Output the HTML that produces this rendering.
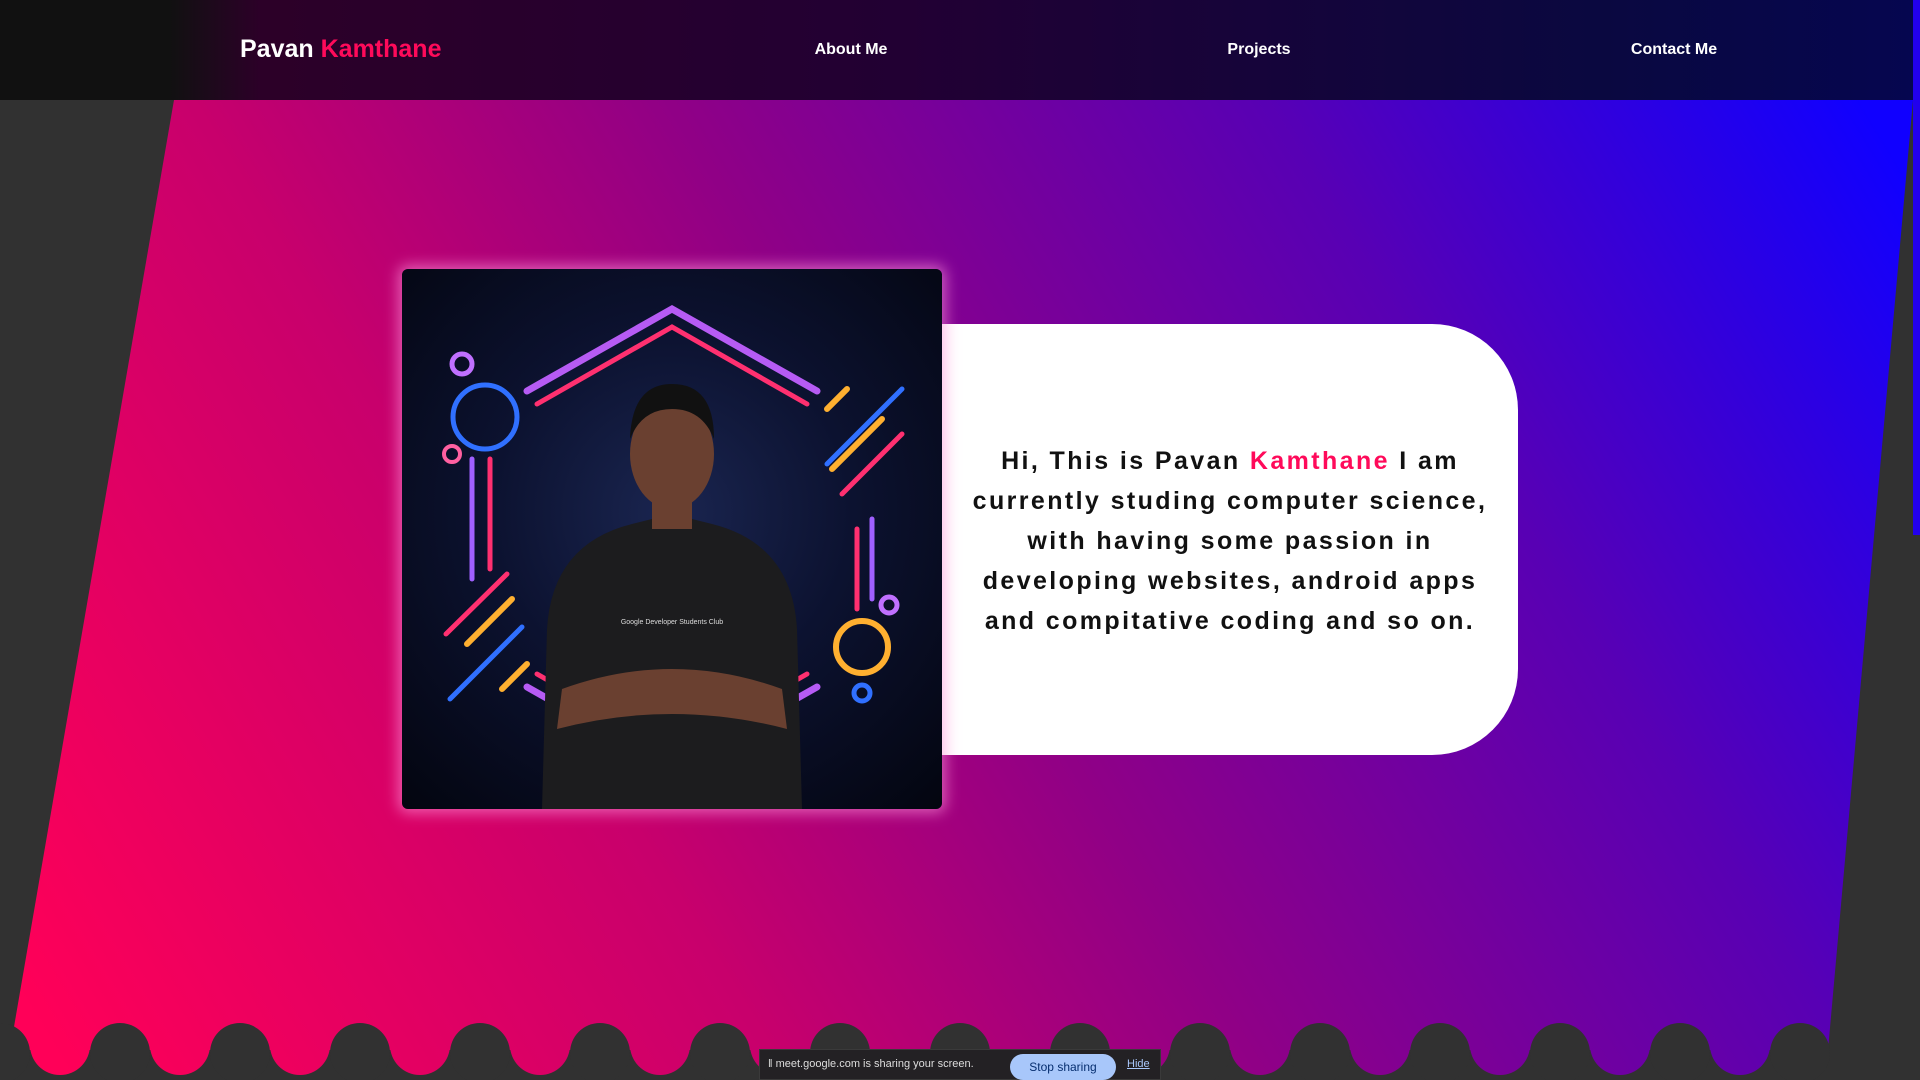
<!DOCTYPE html>
<html><head><meta charset="utf-8"><style>
*{margin:0;padding:0;box-sizing:border-box}
html,body{width:1920px;height:1080px;overflow:hidden;background:#313131;font-family:"Liberation Sans",sans-serif}
nav{position:absolute;left:0;top:0;width:1920px;height:100px;background:linear-gradient(90deg,#111 0,#111 170px,#2c0028 260px,#220033 900px,#0a0840 1600px,#050650 1920px)}
.logo{position:absolute;left:240px;top:35px;font-size:25px;font-weight:bold;color:#fff}
.logo span{color:#ff0a5a}
.nl{position:absolute;top:41px;color:#fff;font-size:16px;font-weight:bold;transform:translateX(-50%)}
#bg{position:absolute;left:0;top:0}
.card{position:absolute;left:942px;top:324px;width:576px;height:431px;background:#fff;border-radius:0 86px 86px 0}
.txt{position:absolute;left:932px;top:441px;width:596px;text-align:center;font-size:25px;font-weight:bold;letter-spacing:2.4px;line-height:40px;color:#111}
.txt span{color:#ff0a5a}
.photo{position:absolute;left:402px;top:269px;width:540px;height:540px;border-radius:6px;overflow:hidden;box-shadow:0 0 14px 4px rgba(255,150,220,.6);background:radial-gradient(circle at 50% 45%,#1a2550 0,#0c1230 45%,#03050f 100%)}
.meet{position:absolute;left:759px;top:1049px;width:402px;height:31px;background:#232124;border:1px solid #3a3a3a;color:#ddd;font-size:11px}
.scroll{position:absolute;left:1913px;top:0;width:7px;height:535px;background:#2200ee}
</style></head><body>
<svg id="bg" width="1920" height="1080">
<defs><linearGradient id="g" gradientUnits="userSpaceOnUse" x1="60" y1="1060" x2="1800" y2="0"><stop offset="0" stop-color="#ff0058"/><stop offset=".3" stop-color="#c8006c"/><stop offset=".5" stop-color="#900086"/><stop offset=".75" stop-color="#5800b4"/><stop offset="1" stop-color="#1000ff"/></linearGradient></defs>
<polygon points="174,100 1913,100 1828,1050 10,1050" fill="url(#g)"/>
<g fill="url(#g)">
<circle cx="60" cy="1045" r="30"/><circle cx="180" cy="1045" r="30"/><circle cx="300" cy="1045" r="30"/><circle cx="420" cy="1045" r="30"/><circle cx="540" cy="1045" r="30"/><circle cx="660" cy="1045" r="30"/><circle cx="780" cy="1045" r="30"/><circle cx="900" cy="1045" r="30"/><circle cx="1020" cy="1045" r="30"/><circle cx="1140" cy="1045" r="30"/><circle cx="1260" cy="1045" r="30"/><circle cx="1380" cy="1045" r="30"/><circle cx="1500" cy="1045" r="30"/><circle cx="1620" cy="1045" r="30"/><circle cx="1740" cy="1045" r="30"/>
</g>
<g fill="#313131">
<circle cx="0" cy="1053" r="30"/><circle cx="120" cy="1053" r="30"/><circle cx="240" cy="1053" r="30"/><circle cx="360" cy="1053" r="30"/><circle cx="480" cy="1053" r="30"/><circle cx="600" cy="1053" r="30"/><circle cx="720" cy="1053" r="30"/><circle cx="840" cy="1053" r="30"/><circle cx="960" cy="1053" r="30"/><circle cx="1080" cy="1053" r="30"/><circle cx="1200" cy="1053" r="30"/><circle cx="1320" cy="1053" r="30"/><circle cx="1440" cy="1053" r="30"/><circle cx="1560" cy="1053" r="30"/><circle cx="1680" cy="1053" r="30"/><circle cx="1800" cy="1053" r="30"/>
</g>
</svg>
<nav>
<div class="logo">Pavan <span>Kamthane</span></div>
<div class="nl" style="left:851px">About Me</div>
<div class="nl" style="left:1259px">Projects</div>
<div class="nl" style="left:1674px">Contact Me</div>
</nav>
<div class="scroll"></div>
<div class="card"></div>
<div class="txt">Hi, This is Pavan <span>Kamthane</span> I am<br>currently studing computer science,<br>with having some passion in<br>developing websites, android apps<br>and compitative coding and so on.</div>
<div class="photo">
<svg width="540" height="540" viewBox="0 0 540 540">
<g fill="none" stroke-linecap="round">
<g stroke="#c060ff" stroke-width="7" opacity=".95">
<polyline points="125,122 270,40 415,122"/><polyline points="125,418 270,500 415,418"/>
</g>
<g stroke="#ff3070" stroke-width="5">
<polyline points="135,135 270,58 405,135"/><polyline points="135,405 270,482 405,405"/>
<line x1="88" y1="190" x2="88" y2="300"/><line x1="455" y1="260" x2="455" y2="340"/>
<line x1="44" y1="365" x2="105" y2="305"/><line x1="440" y1="225" x2="500" y2="165"/>
</g>
<g stroke="#a060ff" stroke-width="5"><line x1="70" y1="190" x2="70" y2="310"/><line x1="470" y1="250" x2="470" y2="330"/></g>
<g stroke="#ffb030" stroke-width="6"><line x1="65" y1="375" x2="110" y2="330"/><line x1="430" y1="200" x2="480" y2="150"/><line x1="425" y1="140" x2="445" y2="120"/><line x1="100" y1="420" x2="125" y2="395"/><circle cx="460" cy="378" r="26"/></g>
<g stroke="#3070ff" stroke-width="5"><line x1="48" y1="430" x2="120" y2="358"/><line x1="425" y1="195" x2="500" y2="120"/><circle cx="83" cy="148" r="32"/><circle cx="460" cy="424" r="8"/></g>
<g stroke="#c070ff" stroke-width="5"><circle cx="60" cy="95" r="10"/><circle cx="487" cy="336" r="8"/></g>
<circle cx="50" cy="185" r="8" stroke="#ff60a0" stroke-width="4"/>
</g>
<path d="M140 540 L145 360 Q150 275 230 255 L270 245 L310 255 Q390 275 395 360 L400 540 Z" fill="#1c1c1e"/>
<ellipse cx="270" cy="185" rx="42" ry="55" fill="#6a4030"/>
<path d="M228 170 Q230 115 270 115 Q312 115 312 170 Q300 140 270 140 Q240 140 228 170Z" fill="#111"/>
<rect x="250" y="225" width="40" height="35" fill="#6a4030"/>
<path d="M160 420 Q270 380 380 420 L385 460 Q270 430 155 460Z" fill="#6a4030"/>
<text x="270" y="355" fill="#ddd" font-size="7" text-anchor="middle" font-family="Liberation Sans">Google Developer Students Club</text>
</svg>
</div>
<div class="meet"><span style="position:absolute;left:8px;top:8px">‖ meet.google.com is sharing your screen.</span><span style="position:absolute;left:250px;top:4px;width:106px;height:26px;border-radius:13px;background:#a8c7fa;color:#062e6f;text-align:center;line-height:26px;font-size:12px">Stop sharing</span><span style="position:absolute;left:367px;top:8px;color:#a8c7fa;text-decoration:underline">Hide</span></div>
</body></html>
